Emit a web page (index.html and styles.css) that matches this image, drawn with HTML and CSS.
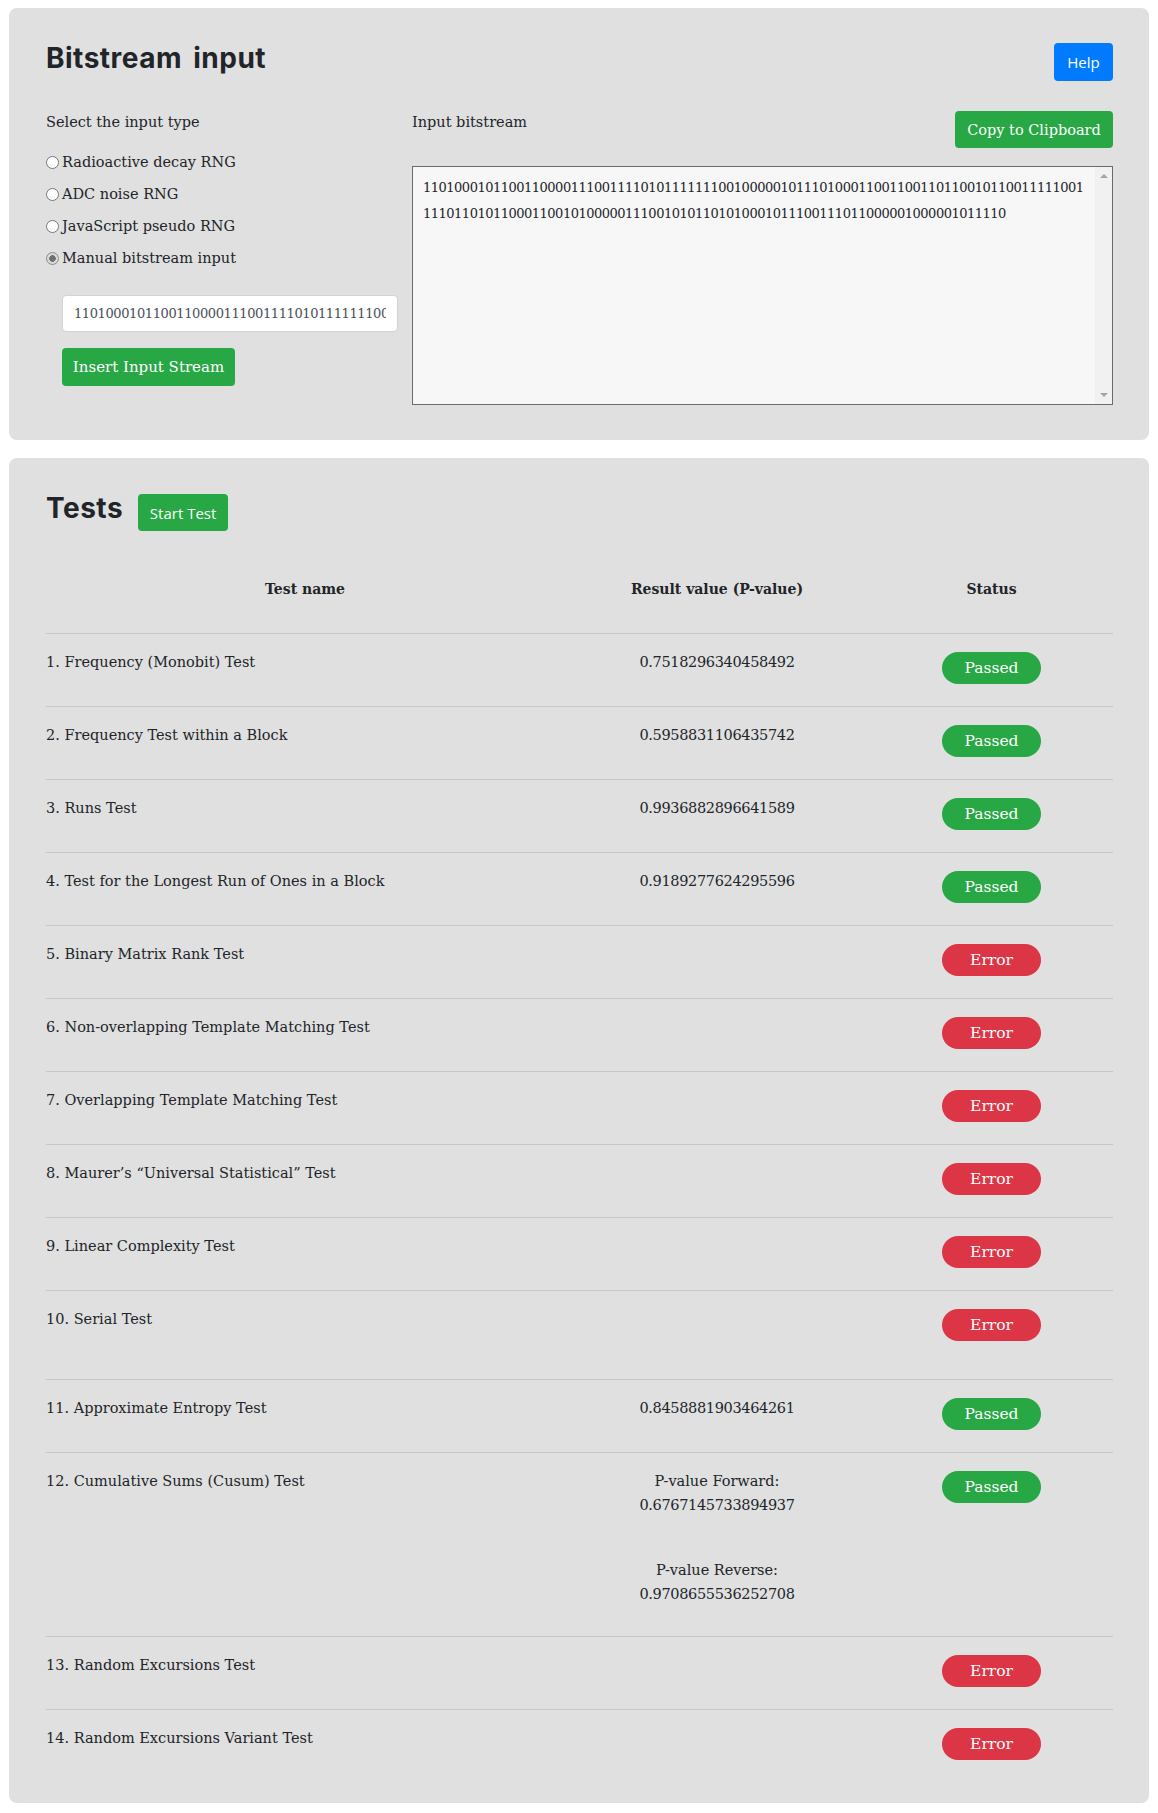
FILE: index.html
```html
<!DOCTYPE html>
<html lang="en">
<head>
<meta charset="utf-8">
<title>NIST randomness tests</title>
<link rel="stylesheet" href="styles.css">
</head>
<body>
<main class="page">
  <section class="card input-card">
    <div class="card-head">
      <h1 class="title">Bitstream input</h1>
      <button class="btn btn-blue help" type="button">Help</button>
    </div>
    <div class="input-grid">
      <div class="input-type">
        <p class="label">Select the input type</p>
        <div class="radios">
          <label class="radio-row"><input class="radio" type="radio" name="src">Radioactive decay RNG</label>
          <label class="radio-row"><input class="radio" type="radio" name="src">ADC noise RNG</label>
          <label class="radio-row"><input class="radio" type="radio" name="src">JavaScript pseudo RNG</label>
          <label class="radio-row"><input class="radio" type="radio" name="src" checked>Manual bitstream input</label>
        </div>
        <input class="bits-field" type="text" value="1101000101100110000111001111010111111100100000101110100011001100110110010110011111001111011010110001100101000001110010101101010001011100111011000001000001011110">
        <button class="btn btn-green insert" type="button">Insert Input Stream</button>
      </div>
      <div class="stream">
        <div class="stream-head">
          <p class="label">Input bitstream</p>
          <button class="btn btn-green copy" type="button">Copy to Clipboard</button>
        </div>
        <div class="stream-box">
          <textarea class="stream-text" readonly>1101000101100110000111001111010111111100100000101110100011001100110110010110011111001
111011010110001100101000001110010101101010001011100111011000001000001011110</textarea>
          <div class="scroll"><span class="arrow up"></span><span class="arrow down"></span></div>
        </div>
      </div>
    </div>
  </section>

  <section class="card tests-card">
    <div class="card-head tests-head">
      <h2 class="title">Tests</h2>
      <button class="btn btn-green start" type="button">Start Test</button>
    </div>
    <table class="results">
      <colgroup>
        <col class="c-name">
        <col class="c-value">
        <col class="c-status">
      </colgroup>
      <thead>
        <tr><th>Test name</th><th>Result value (P-value)</th><th>Status</th></tr>
      </thead>
      <tbody>
        <tr><td>1. Frequency (Monobit) Test</td><td><span class="num">0.7518296340458492</span></td><td><span class="badge ok">Passed</span></td></tr>
        <tr><td>2. Frequency Test within a Block</td><td><span class="num">0.5958831106435742</span></td><td><span class="badge ok">Passed</span></td></tr>
        <tr><td>3. Runs Test</td><td><span class="num">0.9936882896641589</span></td><td><span class="badge ok">Passed</span></td></tr>
        <tr><td>4. Test for the Longest Run of Ones in a Block</td><td><span class="num">0.9189277624295596</span></td><td><span class="badge ok">Passed</span></td></tr>
        <tr><td>5. Binary Matrix Rank Test</td><td></td><td><span class="badge err">Error</span></td></tr>
        <tr><td>6. Non-overlapping Template Matching Test</td><td></td><td><span class="badge err">Error</span></td></tr>
        <tr><td>7. Overlapping Template Matching Test</td><td></td><td><span class="badge err">Error</span></td></tr>
        <tr><td>8. Maurer’s “Universal Statistical” Test</td><td></td><td><span class="badge err">Error</span></td></tr>
        <tr><td>9. Linear Complexity Test</td><td></td><td><span class="badge err">Error</span></td></tr>
        <tr class="serial"><td>10. Serial Test</td><td></td><td><span class="badge err">Error</span></td></tr>
        <tr><td>11. Approximate Entropy Test</td><td><span class="num">0.8458881903464261</span></td><td><span class="badge ok">Passed</span></td></tr>
        <tr class="cusum"><td>12. Cumulative Sums (Cusum) Test</td><td><div class="pv">P-value Forward:<br><span class="num">0.6767145733894937</span></div><div class="pv">P-value Reverse:<br><span class="num">0.9708655536252708</span></div></td><td><span class="badge ok">Passed</span></td></tr>
        <tr><td>13. Random Excursions Test</td><td></td><td><span class="badge err">Error</span></td></tr>
        <tr><td>14. Random Excursions Variant Test</td><td></td><td><span class="badge err">Error</span></td></tr>
      </tbody>
    </table>
  </section>
</main>
</body>
</html>
```

FILE: styles.css
```css
* { box-sizing: border-box; }

body {
  margin: 0;
  background: #ffffff;
  color: #212529;
  font-family: "DejaVu Serif", "Liberation Serif", serif;
  font-size: 14.5px;
  line-height: 24px;
}

.page {
  padding: 8px 9px 10px;
}

.card {
  background: #e0e0e0;
  border-radius: 8px;
  padding: 32px 36px 35px 37px;
}

.card + .card {
  margin-top: 18px;
}

.card-head {
  display: flex;
  align-items: flex-start;
  justify-content: space-between;
}

.title {
  margin: 0;
  font-family: "Inter", "DejaVu Sans", sans-serif;
  font-weight: 700;
  font-size: 28px;
  line-height: 36px;
  letter-spacing: 0.5px;
  word-spacing: 4px;
  color: #212529;
}

.btn {
  border: none;
  border-radius: 4px;
  color: #ffffff;
  font-family: "DejaVu Serif", serif;
  font-size: 14.5px;
  padding: 0;
  text-align: center;
  cursor: pointer;
}

.btn-green { background: #28a745; }
.btn-blue { background: #007bff; }

.help {
  font-family: "Open Sans", "Noto Sans", sans-serif;
  font-size: 15px;
  width: 59px;
  height: 38px;
  margin-top: 3px;
}

/* input card */
.input-grid {
  display: grid;
  grid-template-columns: 352px 1fr;
  column-gap: 14px;
  margin-top: 29px;
}

.label {
  margin: 0;
}

.radios {
  display: flex;
  flex-direction: column;
  gap: 8px;
  margin: 16px 0 25px;
}

.radio-row {
  display: flex;
  align-items: center;
  height: 24px;
}

.radio {
  appearance: none;
  -webkit-appearance: none;
  width: 13px;
  height: 13px;
  margin: 0 3px 0 0;
  border: 1px solid #767676;
  border-radius: 50%;
  background: #ffffff;
  flex: none;
}

.radio:checked {
  border-color: #8c8c8c;
  background: radial-gradient(circle, #6f6f6f 0 3px, #d9d9d9 3.6px);
}

.bits-field {
  display: block;
  margin-left: 16px;
  width: 336px;
  height: 37px;
  border: 1px solid #ced4da;
  border-radius: 4px;
  background: #ffffff;
  padding: 0 11px;
  font-family: "DejaVu Serif", serif;
  font-size: 13px;
  letter-spacing: -0.4px;
  color: #495057;
}

.insert {
  display: block;
  margin: 16px 0 0 16px;
  width: 173px;
  height: 38px;
  font-size: 15px;
}

.stream-head {
  display: flex;
  justify-content: space-between;
  align-items: flex-start;
}

.copy {
  width: 158px;
  height: 37px;
  margin-top: 1px;
  font-size: 14.5px;
}

.stream-box {
  display: flex;
  margin-top: 18px;
  height: 239px;
  border: 1px solid #6b6b6b;
  background: #f7f7f7;
}

.stream-text {
  flex: 1;
  border: none;
  background: transparent;
  resize: none;
  overflow: hidden;
  white-space: pre;
  padding: 8px 10px;
  font-family: "DejaVu Serif", serif;
  font-size: 13px;
  letter-spacing: -0.5px;
  line-height: 25.5px;
  color: #212529;
  outline: none;
}

.scroll {
  width: 17px;
  flex: none;
  background: #f1f1f1;
  display: flex;
  flex-direction: column;
  justify-content: space-between;
  align-items: center;
  padding: 7px 0;
}

.arrow {
  width: 0;
  height: 0;
  border-left: 4px solid transparent;
  border-right: 4px solid transparent;
}

.arrow.up { border-bottom: 4px solid #a3a3a3; }
.arrow.down { border-top: 4px solid #a3a3a3; }

/* tests card */
.tests-card {
  padding-bottom: 21px;
}

.tests-head {
  justify-content: flex-start;
  gap: 15px;
}

.start {
  font-family: "Open Sans", "Noto Sans", sans-serif;
  font-size: 15px;
  width: 90px;
  height: 37px;
  margin-top: 4px;
}

.results {
  width: 100%;
  margin-top: 14px;
  border-collapse: collapse;
  table-layout: fixed;
}

.c-name { width: 518px; }
.c-value { width: 306px; }
.c-status { width: 243px; }

.results th {
  padding: 32px 0;
  font-size: 14px;
  font-weight: 700;
  text-align: center;
  border-bottom: 1px solid #c6c6c6;
}

.results td {
  padding: 16px 0 22px;
  vertical-align: top;
  text-align: center;
  border-bottom: 1px solid #c6c6c6;
}

.results td:first-child {
  text-align: left;
}

.results tbody tr:last-child td {
  border-bottom: none;
}

.results .serial td {
  padding-bottom: 38px;
}

.results .cusum td {
  padding-bottom: 30px;
}

.pv + .pv {
  margin-top: 41px;
}

.num {
  letter-spacing: -0.35px;
}

.badge {
  display: inline-block;
  width: 99px;
  height: 32px;
  margin-top: 2px;
  border-radius: 16px;
  line-height: 32px;
  font-size: 15.5px;
  color: #ffffff;
  text-align: center;
}

.badge.ok { background: #28a745; }
.badge.err { background: #dc3545; }
```
